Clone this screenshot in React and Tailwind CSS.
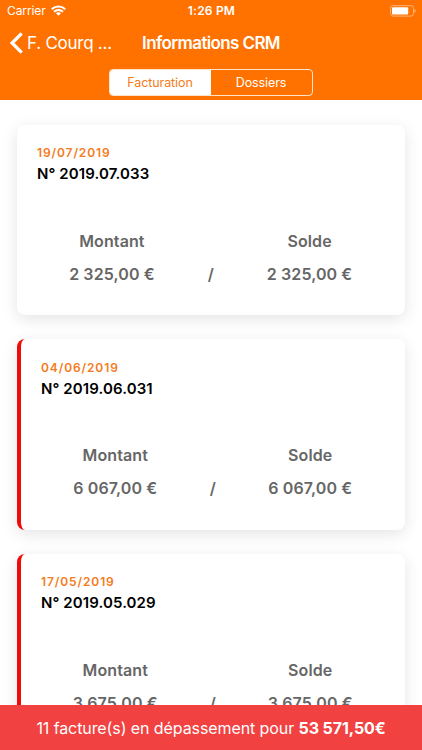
import React from "react";

const invoices = [
  { date: "19/07/2019", number: "2019.07.033", amount: "2 325,00 €", late: false },
  { date: "04/06/2019", number: "2019.06.031", amount: "6 067,00 €", late: true },
  { date: "17/05/2019", number: "2019.05.029", amount: "3 675,00 €", late: true },
];

function StatusBar() {
  return (
    <div className="grid h-[22px] grid-cols-3 items-center pl-[7px] pr-[6px] text-[12px] leading-[22px]">
      <div className="flex items-center gap-[5px]">
        <span className="tracking-[-0.1px]">Carrier</span>
        <svg className="-mt-px" width="15" height="11" viewBox="0 0 15 11" fill="none" stroke="white" strokeWidth="2.1">
          <path d="M0.8 4.2C4.5.5 10.5.5 14.2 4.2" />
          <path d="M3.1 6.8C5.6 4.4 9.4 4.4 11.9 6.8" />
          <path d="M7.5 10.8 5 8.3C6.3 7 8.7 7 10 8.3Z" fill="white" stroke="none" />
        </svg>
      </div>
      <span className="text-center font-semibold tracking-[0.2px]">1:26 PM</span>
      <svg className="-mt-px justify-self-end" width="26" height="12" viewBox="0 0 26 12" fill="none">
        <rect x="0.5" y="0.7" width="23" height="10.4" rx="2.5" stroke="#ffb477" />
        <rect x="2" y="2.2" width="16.2" height="7.4" rx="1" fill="white" />
        <path d="M24.5 4.1C26.2 4.6 26.2 7.2 24.5 7.7Z" fill="#ffb477" />
      </svg>
    </div>
  );
}

function InvoiceCard({ invoice }) {
  return (
    <article
      className={
        "h-[190.3px] shrink-0 rounded-[8px] bg-white pt-[19.5px] shadow-[0_4px_16px_rgba(0,0,0,0.11)] " +
        (invoice.late ? "border-l-[4px] border-[#f00a0a]" : "")
      }
    >
      <div className="pl-[20.5px]">
        <div className="text-[12px] font-semibold leading-[18px] tracking-[0.9px] text-[#f47b20]">{invoice.date}</div>
        <div className="mt-[2px] text-[15px] font-semibold leading-[20px] tracking-[0.1px] text-black">
          N° {invoice.number}
        </div>
      </div>
      <div className="mx-[46px] mt-[44.7px] grid grid-cols-3 justify-items-center whitespace-nowrap text-[16px] font-semibold leading-[24px] tracking-[0.1px] text-[#666]">
        <span>Montant</span>
        <span />
        <span>Solde</span>
      </div>
      <div className="mx-[46px] mt-[8.8px] grid grid-cols-3 justify-items-center whitespace-nowrap text-[16px] font-semibold leading-[24px] tracking-[0.1px] text-[#666]">
        <span>{invoice.amount}</span>
        <span>/</span>
        <span>{invoice.amount}</span>
      </div>
    </article>
  );
}

export default function App() {
  return (
    <div className="flex h-[750px] w-[422px] flex-col overflow-hidden bg-white font-['Inter','Liberation_Sans',sans-serif]">
      <header className="h-[100px] shrink-0 bg-[#ff7200] text-white">
        <StatusBar />
        <div className="grid h-[43px] grid-cols-[142px_138px_142px] items-center">
          <div className="flex items-center gap-[4px] pl-[10px]">
            <svg className="-mt-px" width="13" height="22" viewBox="0 0 13 22" fill="none" stroke="white" strokeWidth="3.3">
              <path d="M11.7 1.3 2.1 11l9.6 9.7" />
            </svg>
            <span className="whitespace-nowrap text-[17px] tracking-[-0.25px]">F. Courq ...</span>
          </div>
          <h1 className="whitespace-nowrap text-center text-[17px] font-semibold tracking-[-0.62px]">Informations CRM</h1>
        </div>
        <div className="mx-auto mt-[4px] grid h-[27px] w-[204px] grid-cols-2 overflow-hidden rounded-[4px] border border-[#ffe4cb] text-center text-[12.5px] leading-[26px]">
          <div className="bg-white pr-[1px] tracking-[-0.1px] text-[#f47b20]">Facturation</div>
          <div className="pr-[1px] tracking-[-0.1px]">Dossiers</div>
        </div>
      </header>
      <main className="flex min-h-0 flex-1 flex-col gap-[24.4px] overflow-hidden pl-[16.5px] pr-[17px] pt-[24.6px]">
        {invoices.map((invoice) => (
          <InvoiceCard key={invoice.number} invoice={invoice} />
        ))}
      </main>
      <footer className="h-[45px] shrink-0 whitespace-nowrap bg-[#f14141] text-center text-[16px] leading-[46px] tracking-[-0.09px] text-white">
        11 facture(s) en dépassement pour <b className="font-bold">53 571,50€</b>
      </footer>
    </div>
  );
}
